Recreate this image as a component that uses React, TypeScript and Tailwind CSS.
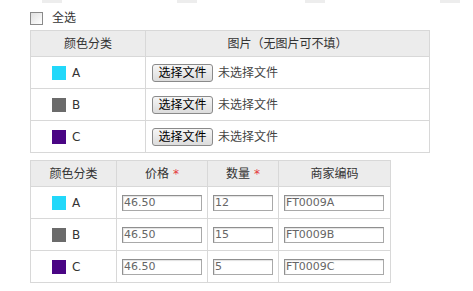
import React from 'react'

const cjk = '[font-family:"DejaVu_Sans","Noto_Sans_CJK_SC",sans-serif]'

type Sku = { name: string; color: string; price: string; qty: string; code: string }

const skus: Sku[] = [
  { name: 'A', color: 'bg-[#22d8fa]', price: '46.50', qty: '12', code: 'FT0009A' },
  { name: 'B', color: 'bg-[#6b6b6b]', price: '46.50', qty: '15', code: 'FT0009B' },
  { name: 'C', color: 'bg-[#4a0584]', price: '46.50', qty: '5', code: 'FT0009C' },
]

function ColorCell({ sku }: { sku: Sku }) {
  return (
    <div className="flex items-center pl-[21px] gap-[6px]">
      <span className={`block w-[14px] h-[14px] ${sku.color}`} />
      <span className="text-[#333]">{sku.name}</span>
    </div>
  )
}

function TextBox({ value, width }: { value: string; width: string }) {
  return (
    <div
      className={`${width} h-[16px] border border-[#a9a9a9] border-t-[#8f8f8f] border-l-[#8f8f8f] bg-white text-[#666] leading-[14px] pl-[1px] text-[11px] shadow-[inset_1px_1px_1px_rgba(0,0,0,0.12)]`}
    >
      {value}
    </div>
  )
}

function FileInput() {
  return (
    <div className="flex items-center gap-[5px] pl-[6px]">
      <button className="h-[18px] w-[61px] rounded-[3px] border border-[#8a8a8a] bg-gradient-to-b from-[#f6f6f6] to-[#dcdcdc] text-[12px] leading-[16px] text-black">
        选择文件
      </button>
      <span className="text-[#444] text-[12px]">未选择文件</span>
    </div>
  )
}

export default function App() {
  return (
    <div className={`relative w-[473px] h-[291px] bg-white overflow-hidden ${cjk} text-[12px] text-[#333]`}>
      <div className="flex h-[3px] gap-0">
        <div className="ml-[42px] w-[20px] bg-[#ededed]" />
        <div className="ml-[115px] w-[20px] bg-[#ededed]" />
        <div className="ml-[108px] w-[20px] bg-[#ededed]" />
        <div className="ml-[115px] w-[20px] bg-[#ededed]" />
      </div>
      <div className="flex items-center h-[22px] mt-[4px] pl-[30px]">
        <span className="block w-[13px] h-[13px] border border-[#8a8a8a] bg-gradient-to-br from-[#e0e0e0] to-white" />
        <span className="ml-[9px]">全选</span>
      </div>

      <table className="ml-[30px] mt-[1px] w-[400px] border-collapse border border-[#d8d8d8]">
        <thead>
          <tr className="h-[26px] bg-[#ececec]">
            <th className="w-[115px] border border-[#d8d8d8] font-normal">颜色分类</th>
            <th className="border border-[#d8d8d8] font-normal">图片（无图片可不填）</th>
          </tr>
        </thead>
        <tbody>
          {skus.map((s) => (
            <tr key={s.name} className="h-[32px]">
              <td className="border border-[#d8d8d8]">
                <ColorCell sku={s} />
              </td>
              <td className="border border-[#d8d8d8]">
                <FileInput />
              </td>
            </tr>
          ))}
        </tbody>
      </table>

      <table className="ml-[30px] mt-[7px] w-[361px] border-collapse border border-[#d8d8d8]">
        <thead>
          <tr className="h-[26px] bg-[#ececec]">
            <th className="w-[86px] border border-[#d8d8d8] font-normal">颜色分类</th>
            <th className="w-[91px] border border-[#d8d8d8] font-normal">
              价格 <span className="text-[#e4393c]">*</span>
            </th>
            <th className="w-[71px] border border-[#d8d8d8] font-normal">
              数量 <span className="text-[#e4393c]">*</span>
            </th>
            <th className="border border-[#d8d8d8] font-normal">商家编码</th>
          </tr>
        </thead>
        <tbody>
          {skus.map((s) => (
            <tr key={s.name} className="h-[32px]">
              <td className="border border-[#d8d8d8]">
                <ColorCell sku={s} />
              </td>
              <td className="border border-[#d8d8d8] pl-[5px]">
                <TextBox value={s.price} width="w-[80px]" />
              </td>
              <td className="border border-[#d8d8d8] pl-[5px]">
                <TextBox value={s.qty} width="w-[60px]" />
              </td>
              <td className="border border-[#d8d8d8] pl-[5px]">
                <TextBox value={s.code} width="w-[100px]" />
              </td>
            </tr>
          ))}
        </tbody>
      </table>

      <div className="ml-[31px] mt-[8px] w-[67px] h-[2px] border-t border-[#a0a0a0]" />
    </div>
  )
}
